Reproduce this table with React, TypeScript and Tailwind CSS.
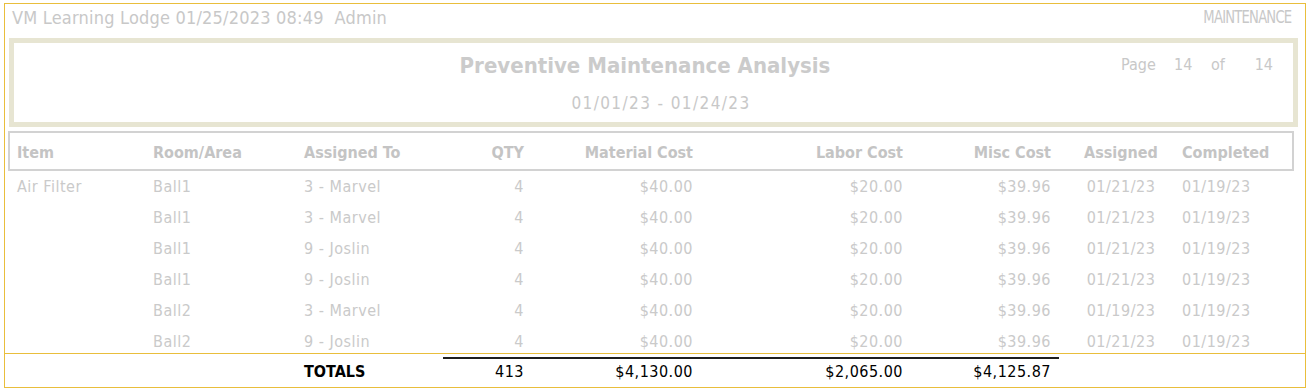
import React from "react";

const FONT = { fontFamily: '"DejaVu Sans Condensed", "DejaVu Sans", Tahoma, sans-serif' };

const cols = [
  { w: "w-[134px]", cls: "pl-[7px] text-left" },
  { w: "w-[151px]", cls: "pl-[9px] text-left" },
  { w: "w-[148px]", cls: "pl-[9px] text-left" },
  { w: "w-[89px]", cls: "pr-[8px] text-right" },
  { w: "w-[169px]", cls: "pr-[8px] text-right" },
  { w: "w-[210px]", cls: "pr-[8px] text-right" },
  { w: "w-[148px]", cls: "pr-[8px] text-right" },
  { w: "w-[119px]", cls: "pl-[5px] text-center" },
  { w: "w-[114px]", cls: "pl-[4px] text-left" },
];

const headers = ["Item", "Room/Area", "Assigned To", "QTY", "Material Cost", "Labor Cost", "Misc Cost", "Assigned", "Completed"];

const rows: string[][] = [
  ["Air Filter", "Ball1", "3 - Marvel", "4", "$40.00", "$20.00", "$39.96", "01/21/23", "01/19/23"],
  ["", "Ball1", "3 - Marvel", "4", "$40.00", "$20.00", "$39.96", "01/21/23", "01/19/23"],
  ["", "Ball1", "9 - Joslin", "4", "$40.00", "$20.00", "$39.96", "01/21/23", "01/19/23"],
  ["", "Ball1", "9 - Joslin", "4", "$40.00", "$20.00", "$39.96", "01/21/23", "01/19/23"],
  ["", "Ball2", "3 - Marvel", "4", "$40.00", "$20.00", "$39.96", "01/19/23", "01/19/23"],
  ["", "Ball2", "9 - Joslin", "4", "$40.00", "$20.00", "$39.96", "01/21/23", "01/19/23"],
];

export default function App() {
  return (
    <div className="w-[1312px] h-[392px] bg-white overflow-hidden" style={FONT}>
      <div className="ml-[4px] mt-[3px] w-[1302px] border border-b-0 border-[#e9be3c]">
        {/* top line */}
        <div className="flex h-[27px] items-center justify-between pl-[7px] pr-[14px] text-[#c8c8c8]">
          <span className="whitespace-pre text-[18px] tracking-[0.2px]">VM Learning Lodge 01/25/2023 08:49  Admin</span>
          <span className="inline-block text-[17px] tracking-[-0.9px] scale-x-[0.86] origin-right">MAINTENANCE</span>
        </div>
        {/* title box */}
        <div className="ml-[4px] mt-[7px] w-[1289px] h-[89px] border-[5px] border-[#e7e5d2] flex flex-col">
          <div className="flex h-[44px] items-center">
            <div className="w-[386px] shrink-0" />
            <div className="w-[490px] shrink-0 text-center text-[22px] font-bold text-[#cbcbcb]">
              Preventive Maintenance Analysis
            </div>
            <div className="pl-[231px] flex text-[16px] text-[#c8c8c8]">
              <span className="inline-block w-[53px]">Page</span>
              <span className="inline-block w-[37px]">14</span>
              <span className="inline-block w-[29px]">of</span>
              <span className="inline-block w-[33px] text-right">14</span>
            </div>
          </div>
          <div className="flex-1 flex items-start justify-center pt-[4px] pl-[15px] text-[17px] tracking-[1.4px] text-[#c8c8c8]">
            01/01/23 - 01/24/23
          </div>
        </div>
        {/* header row */}
        <div className="ml-[3px] mt-[4px] w-[1286px] h-[40px] border-2 border-[#d2d2d2] flex items-center pt-[3px] text-[16px] font-bold text-[#c4c4c4]">
          {headers.map((h, i) => (
            <div key={i} className={`${cols[i].w} ${cols[i].cls} shrink-0`}>
              {h}
            </div>
          ))}
        </div>
        {/* data rows */}
        <div className="ml-[5px] h-[182px] flex flex-col text-[16px] tracking-[0.5px] text-[#cacaca]">
          {rows.map((r, ri) => (
            <div key={ri} className="flex h-[31px] shrink-0 items-center">
              {r.map((c, i) => (
                <div key={i} className={`${cols[i].w} ${cols[i].cls} shrink-0`}>
                  {c}
                </div>
              ))}
            </div>
          ))}
        </div>
      </div>
      {/* totals */}
      <div className="ml-[4px] w-[1302px] h-[35px] border border-[#e9be3c] flex text-[16px] text-black">
        <div className="ml-[5px] flex">
          <div className={`${cols[0].w} shrink-0`} />
          <div className={`${cols[1].w} shrink-0`} />
          <div className={`${cols[2].w} ${cols[2].cls} shrink-0 font-bold pt-[6px]`}>TOTALS</div>
          <div className={`${cols[3].w} ${cols[3].cls} shrink-0 mt-[3px] border-t-2 border-[#1e1e1e] pt-[1px] tracking-[0.5px]`}>413</div>
          <div className={`${cols[4].w} ${cols[4].cls} shrink-0 mt-[3px] border-t-2 border-[#1e1e1e] pt-[1px] tracking-[0.5px]`}>$4,130.00</div>
          <div className={`${cols[5].w} ${cols[5].cls} shrink-0 mt-[3px] border-t-2 border-[#1e1e1e] pt-[1px] tracking-[0.5px]`}>$2,065.00</div>
          <div className={`${cols[6].w} ${cols[6].cls} shrink-0 mt-[3px] border-t-2 border-[#1e1e1e] pt-[1px] tracking-[0.5px]`}>$4,125.87</div>
        </div>
      </div>
    </div>
  );
}
